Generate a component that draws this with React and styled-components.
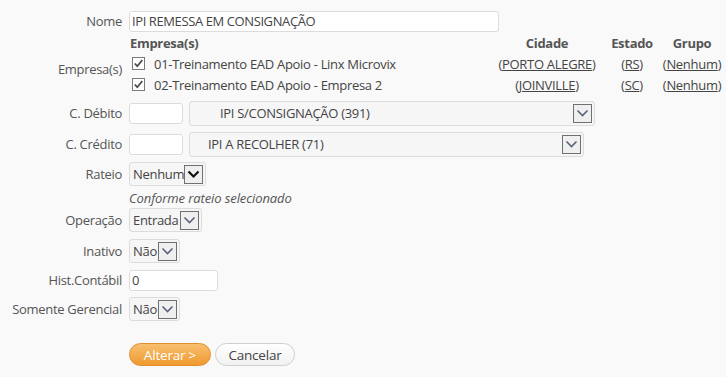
import React from "react";
import styled, { createGlobalStyle } from "styled-components";

const Global = createGlobalStyle`
  html, body { margin: 0; padding: 0; background: #f9f9f9; }
  body { font-family: "Open Sans", "Noto Sans", sans-serif; font-size: 13px; color: #555; }
`;

const Form = styled.div`
  display: flex;
  flex-direction: column;
  padding-top: 9px;
  width: 726px;
`;

const Row = styled.div`
  display: flex;
  align-items: ${(p) => p.$align || "center"};
  height: ${(p) => p.$h}px;
  margin-top: ${(p) => p.$mt || 0}px;
  gap: 7px;
`;

const Label = styled.div`
  width: 122px;
  flex: none;
  text-align: right;
  color: #555;
  letter-spacing: -0.3px;
  padding-top: ${(p) => p.$pt || 0}px;
`;

const TextInput = styled.div`
  box-sizing: border-box;
  width: ${(p) => p.$w}px;
  height: ${(p) => p.$h || 21}px;
  background: #fff;
  border: 1px solid #dcdcdc;
  border-radius: 3px;
  padding-left: 2px;
  display: flex;
  align-items: center;
  color: #444;
  letter-spacing: -0.4px;
`;

const Select = styled.div`
  box-sizing: border-box;
  width: ${(p) => p.$w}px;
  height: ${(p) => p.$h || 24}px;
  background: #f6f6f6;
  border: 1px solid #dcdcdc;
  border-radius: 3px;
  display: flex;
  align-items: center;
  padding-left: ${(p) => p.$pl || 3}px;
  padding-right: 2px;
  color: #444;
  letter-spacing: -0.3px;
  white-space: nowrap;
`;

const SelectText = styled.span`
  flex: 1;
`;

const Arrow = styled.div`
  box-sizing: border-box;
  width: 19px;
  height: 19px;
  flex: none;
  border: 1px solid #707070;
  background: #efefef;
  display: flex;
  align-items: center;
  justify-content: center;
`;

const Chevron = ({ dark }) => (
  <svg width="13" height="9" viewBox="0 0 13 9">
    <path
      d="M1.5 1.5 L6.5 6.5 L11.5 1.5"
      fill="none"
      stroke={dark ? "#111" : "#5a6478"}
      strokeWidth={dark ? 2.2 : 1.6}
    />
  </svg>
);

const FakeSelect = ({ w, h, pl, children, dark }) => (
  <Select $w={w} $h={h} $pl={pl}>
    <SelectText>{children}</SelectText>
    <Arrow>
      <Chevron dark={dark} />
    </Arrow>
  </Select>
);

const Fields = styled.div`
  display: flex;
  align-items: center;
  gap: 6px;
`;

const Table = styled.div`
  display: grid;
  grid-template-columns: 361px 114px 56px 64px;
  grid-template-rows: 20px 21px 21px;
  align-items: center;
  letter-spacing: -0.3px;
`;

const Th = styled.div`
  font-weight: 700;
  color: #555;
  text-align: ${(p) => (p.$left ? "left" : "center")};
  padding-left: ${(p) => (p.$left ? 1 : 0)}px;
`;

const Td = styled.div`
  display: flex;
  align-items: center;
  justify-content: ${(p) => (p.$left ? "flex-start" : "center")};
  color: #444;
  white-space: nowrap;
`;

const Link = styled.span`
  text-decoration: underline;
  color: #444;
`;

const Check = styled.span`
  display: inline-flex;
  margin: 0 9px 0 3px;
`;

const CheckBox = () => (
  <Check>
    <svg width="13" height="13" viewBox="0 0 13 13">
      <rect x="0.5" y="0.5" width="12" height="12" fill="#fff" stroke="#7a7a7a" />
      <path d="M2.8 6.5 L5.3 9.2 L10.3 3" fill="none" stroke="#4a4a4a" strokeWidth="1.8" />
    </svg>
  </Check>
);

const Hint = styled.div`
  margin-left: 129px;
  font-style: italic;
  color: #555;
  letter-spacing: -0.1px;
`;

const Buttons = styled.div`
  display: flex;
  gap: 4px;
  margin-left: 129px;
  margin-top: 22px;
`;

const Button = styled.div`
  box-sizing: border-box;
  height: 23px;
  width: ${(p) => p.$w}px;
  border-radius: 12px;
  display: flex;
  align-items: center;
  justify-content: center;
  font-size: 13.5px;
  letter-spacing: -0.2px;
  border: 1px solid ${(p) => (p.$primary ? "#de8f2c" : "#cfcfcf")};
  background: ${(p) =>
    p.$primary
      ? "linear-gradient(#f8bf70, #ef9a2e)"
      : "linear-gradient(#ffffff, #f1f1f1)"};
  color: ${(p) => (p.$primary ? "#fff" : "#444")};
`;

const empresas = [
  { nome: "01-Treinamento EAD Apoio - Linx Microvix", cidade: "PORTO ALEGRE", uf: "RS" },
  { nome: "02-Treinamento EAD Apoio - Empresa 2", cidade: "JOINVILLE", uf: "SC" },
];

export default function App() {
  return (
    <>
      <Global />
      <Form>
        <Row $h={24}>
          <Label>Nome</Label>
          <TextInput $w={370} $h={21}>IPI REMESSA EM CONSIGNAÇÃO</TextInput>
        </Row>
        <Row $h={62} $align="flex-start">
          <Label $pt={27}>Empresa(s)</Label>
          <Table>
            <Th $left>Empresa(s)</Th>
            <Th>Cidade</Th>
            <Th>Estado</Th>
            <Th>Grupo</Th>
            {empresas.map((e) => (
              <React.Fragment key={e.nome}>
                <Td $left>
                  <CheckBox />
                  {e.nome}
                </Td>
                <Td>
                  (<Link>{e.cidade}</Link>)
                </Td>
                <Td>
                  (<Link>{e.uf}</Link>)
                </Td>
                <Td>
                  (<Link>Nenhum</Link>)
                </Td>
              </React.Fragment>
            ))}
          </Table>
        </Row>
        <Row $h={26} $mt={5}>
          <Label>C. Débito</Label>
          <Fields>
            <TextInput $w={54} />
            <FakeSelect w={406} h={25} pl={30}>IPI S/CONSIGNAÇÃO (391)</FakeSelect>
          </Fields>
        </Row>
        <Row $h={26} $mt={5}>
          <Label>C. Crédito</Label>
          <Fields>
            <TextInput $w={54} />
            <FakeSelect w={395} h={25} pl={18}>IPI A RECOLHER (71)</FakeSelect>
          </Fields>
        </Row>
        <Row $h={24} $mt={5}>
          <Label>Rateio</Label>
          <FakeSelect w={77} dark>Nenhum</FakeSelect>
        </Row>
        <Row $h={16} $mt={4}>
          <Hint>Conforme rateio selecionado</Hint>
        </Row>
        <Row $h={24} $mt={2}>
          <Label>Operação</Label>
          <FakeSelect w={73}>Entrada</FakeSelect>
        </Row>
        <Row $h={24} $mt={7}>
          <Label>Inativo</Label>
          <FakeSelect w={51}>Não</FakeSelect>
        </Row>
        <Row $h={24} $mt={5}>
          <Label>Hist.Contábil</Label>
          <TextInput $w={89}>0</TextInput>
        </Row>
        <Row $h={24} $mt={5}>
          <Label>Somente Gerencial</Label>
          <FakeSelect w={51}>Não</FakeSelect>
        </Row>
        <Buttons>
          <Button $primary $w={82}>Alterar &gt;</Button>
          <Button $w={80}>Cancelar</Button>
        </Buttons>
      </Form>
    </>
  );
}
